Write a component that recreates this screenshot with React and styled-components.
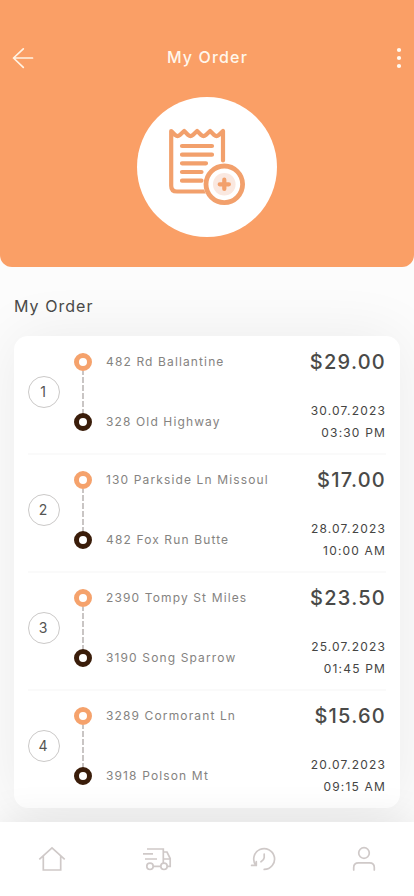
import React from 'react';
import styled, { createGlobalStyle } from 'styled-components';

const GlobalStyle = createGlobalStyle`
  * { box-sizing: border-box; }
  body { margin: 0; background: #fff; font-family: Inter, "Liberation Sans", sans-serif; }
`;

const Screen = styled.div`
  width: 414px;
  height: 896px;
  overflow: hidden;
  display: flex;
  flex-direction: column;
  background: #fcfcfc;
`;

const Header = styled.header`
  height: 267px;
  flex: none;
  padding-top: 38px;
  background: #fa9f66;
  border-radius: 0 0 12px 12px;
  display: flex;
  flex-direction: column;
  align-items: center;
`;

const TopBar = styled.div`
  width: 100%;
  height: 40px;
  margin-bottom: 19px;
  padding: 0 10px 0 12px;
  display: grid;
  grid-template-columns: 22px 1fr 10px;
  align-items: center;
`;

const Title = styled.h1`
  margin: 0 13px 2px 0;
  text-align: center;
  font-size: 16px;
  line-height: 20px;
  font-weight: 500;
  letter-spacing: 1.15px;
  color: #fff7ec;
`;

const Emblem = styled.div`
  width: 140px;
  height: 140px;
  border-radius: 50%;
  background: #fff;
`;

const Content = styled.main`
  flex: none;
  height: 555px;
  padding: 29px 14px 0;
  display: flex;
  flex-direction: column;
`;

const SectionTitle = styled.h2`
  margin: 0 0 20px;
  font-size: 16px;
  line-height: 20px;
  font-weight: 400;
  letter-spacing: 1.05px;
  color: #4a4a48;
`;

const Card = styled.section`
  background: #fff;
  border-radius: 14px;
  box-shadow: 0 0 60px rgba(0, 0, 0, 0.07);
`;

const Row = styled.article`
  height: 118px;
  margin: 0 14px;
  display: flex;
  box-shadow: ${(p) => (p.$last ? 'none' : '0 1px 0 #fafafa, inset 0 -1px 0 #fafafa')};
`;

const Index = styled.div`
  width: 32px;
  height: 32px;
  margin-top: 40px;
  padding: 0 2px 2px 0;
  border: 1px solid #cbc9c8;
  border-radius: 50%;
  display: flex;
  align-items: center;
  justify-content: center;
  font-size: 14px;
  color: #555553;
`;

const Route = styled.div`
  width: 18px;
  margin: 17px 14px 0;
  display: flex;
  flex-direction: column;
  align-items: center;
`;

const Stop = styled.span`
  width: 18px;
  height: 18px;
  flex: none;
  border-radius: 50%;
  border: 5px solid ${(p) => p.$color};
  background: #fff;
`;

const Dashes = styled.span`
  width: 2px;
  height: 42px;
  background: repeating-linear-gradient(#c9c5c4 0 4px, #fff 4px 6px, #c9c5c4 6px 8px);
`;

const Places = styled.div`
  flex: 1;
  padding-top: 16px;
  display: flex;
  flex-direction: column;
  gap: 40px;
`;

const Place = styled.span`
  font-size: 12px;
  line-height: 20px;
  letter-spacing: 1.13px;
  color: #858381;
  white-space: nowrap;
`;

const Summary = styled.div`
  padding-top: 12px;
  display: flex;
  flex-direction: column;
  align-items: flex-end;
`;

const Price = styled.strong`
  margin-bottom: 24px;
  font-size: 20px;
  line-height: 28px;
  font-weight: 450;
  letter-spacing: 1.25px;
  color: #4a4a48;
`;

const Stamp = styled.span`
  font-size: 12px;
  line-height: 22px;
  letter-spacing: 1.17px;
  color: #454543;
`;

const Nav = styled.nav`
  position: relative;
  flex: none;
  height: 74px;
  padding: 0 32px 0 34px;
  display: flex;
  justify-content: space-between;
  align-items: center;
  background: #fff;
  box-shadow: 0 0 40px rgba(0, 0, 0, 0.1);
`;

const NavButton = styled.button`
  width: 36px;
  height: 36px;
  padding: 0;
  border: 0;
  background: none;
`;

const Icon = styled.svg`
  display: block;
  fill: none;
  stroke: ${(p) => p.$color};
  stroke-width: ${(p) => p.$weight};
  stroke-linecap: ${(p) => p.$cap || 'round'};
  stroke-linejoin: ${(p) => p.$join || 'round'};
`;

const orders = [
  { from: '482 Rd Ballantine', to: '328 Old Highway', price: '$29.00', date: '30.07.2023', time: '03:30 PM' },
  { from: '130 Parkside Ln Missoul', to: '482 Fox Run Butte', price: '$17.00', date: '28.07.2023', time: '10:00 AM' },
  { from: '2390 Tompy St Miles', to: '3190 Song Sparrow', price: '$23.50', date: '25.07.2023', time: '01:45 PM' },
  { from: '3289 Cormorant Ln', to: '3918 Polson Mt', price: '$15.60', date: '20.07.2023', time: '09:15 AM' },
];

const ReceiptIcon = () => (
  <Icon $color="#f2a06c" $weight={4.2} width="140" height="140" viewBox="0 0 140 140">
    <path d="M80.5 94.5H40Q34.2 94.5 34.2 88.7V34L38.4 38.2Q40.5 40 42.6 38.2L47.2 34L51.4 38.2Q53.5 40 55.6 38.2L60.1 34L64.4 38.2Q66.5 40 68.6 38.2L73.1 34L77.4 38.2Q79.5 40 81.6 38.2L86 34V63.5" />
    <path d="M45 49H75M45 57.7H75M45 66.3H69M45 75H64.5M45 83.7H64.5" />
    <circle cx="87.3" cy="87.3" r="20.8" fill="#fff" stroke="none" />
    <circle cx="87.3" cy="87.3" r="18.3" strokeWidth="4.8" />
    <circle cx="87.3" cy="87.3" r="11.3" fill="#fae8e0" stroke="none" />
    <path d="M82.7 87.3H91.9M87.3 82.7V91.9" />
  </Icon>
);

const NavIcon = ({ children, cap, join }) => (
  <Icon $color="#cfc9c8" $weight={1.7} $cap={cap} $join={join} width="36" height="36" viewBox="0 0 36 36">
    {children}
  </Icon>
);

export default function App() {
  return (
    <Screen>
      <GlobalStyle />
      <Header>
        <TopBar>
          <Icon $color="#fff3e4" $weight={1.7} width="22" height="22" viewBox="0 0 22 22">
            <path d="M20.5 11H1.5M11.3 1.8L1.5 11L11.3 20.3" />
          </Icon>
          <Title>My Order</Title>
          <Icon $color="none" width="10" height="22" viewBox="0 0 10 22">
            <g fill="#fffaf2">
              <circle cx="5" cy="3" r="2.1" />
              <circle cx="5" cy="11" r="2.1" />
              <circle cx="5" cy="19" r="2.1" />
            </g>
          </Icon>
        </TopBar>
        <Emblem><ReceiptIcon /></Emblem>
      </Header>
      <Content>
        <SectionTitle>My Order</SectionTitle>
        <Card>
          {orders.map((o, i) => (
            <Row key={o.date} $last={i === orders.length - 1}>
              <Index>{i + 1}</Index>
              <Route>
                <Stop $color="#f5a26c" />
                <Dashes />
                <Stop $color="#3a1d0a" />
              </Route>
              <Places>
                <Place>{o.from}</Place>
                <Place>{o.to}</Place>
              </Places>
              <Summary>
                <Price>{o.price}</Price>
                <Stamp>{o.date}</Stamp>
                <Stamp>{o.time}</Stamp>
              </Summary>
            </Row>
          ))}
        </Card>
      </Content>
      <Nav>
        <NavButton aria-label="Home">
          <NavIcon cap="butt" join="miter">
            <path d="M5.3 18.3L18 6.8L30.7 18.3M9.3 15V29H26.7V15" />
          </NavIcon>
        </NavButton>
        <NavButton aria-label="Deliveries">
          <NavIcon cap="butt" join="miter">
            <path d="M9 8H25.3V22M5 12.8H15M7 18H19M25.3 11H29L32.2 17.5V25.3H29.3M25.3 18H32.2M15.3 25.3H22.7" />
            <circle cx="12" cy="25.3" r="3.2" />
            <circle cx="26" cy="25.3" r="3.2" />
          </NavIcon>
        </NavButton>
        <NavButton aria-label="History">
          <NavIcon>
            <path d="M13.8 24.2A10.4 10.4 0 1 1 22.2 28.4M9.6 24.4H14.3V20.6M22.2 13V16.6Q22 19 19 20.8" />
          </NavIcon>
        </NavButton>
        <NavButton aria-label="Profile">
          <NavIcon>
            <circle cx="18" cy="12" r="5.3" />
            <path d="M7.7 29V26.5Q7.7 21.8 12.5 21.8H23.5Q28.3 21.8 28.3 26.5V29" />
          </NavIcon>
        </NavButton>
      </Nav>
    </Screen>
  );
}
